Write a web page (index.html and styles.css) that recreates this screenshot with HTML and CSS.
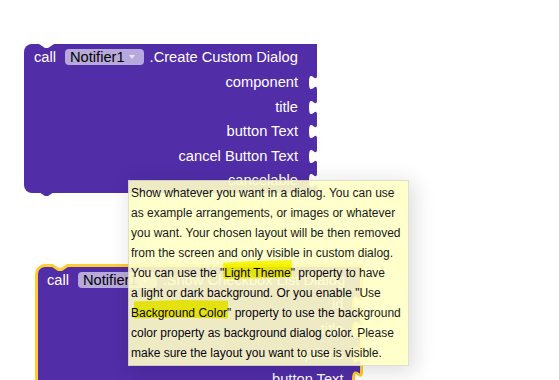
FILE: index.html
```html
<!DOCTYPE html>
<html>
<head>
<meta charset="utf-8">
<link rel="stylesheet" href="styles.css">
</head>
<body>
<div class="workspace">
  <div class="block block-a">
    <svg class="notch" width="15" height="5" viewBox="0 0 15 5"><path d="M0,0 L6,4 L9,4 L15,0 Z" fill="#fff"/></svg>
    <div class="head">
      <span class="kw">call</span>
      <span class="dd">Notifier1<svg class="arr" width="6" height="4" viewBox="0 0 6 4"><path d="M0,0 H6 L3,4 Z" fill="#e9e3f5"/></svg></span>
      <span class="meth">.Create Custom Dialog</span>
    </div>
    <div class="row"><span>component</span><svg class="sock" width="8" height="15" viewBox="0 0 8 15"><path d="M8,0 C8,10 0,-8 0,7.5 S8,5 8,15 Z" fill="#fff"/></svg></div>
    <div class="row"><span>title</span><svg class="sock" width="8" height="15" viewBox="0 0 8 15"><path d="M8,0 C8,10 0,-8 0,7.5 S8,5 8,15 Z" fill="#fff"/></svg></div>
    <div class="row"><span>button Text</span><svg class="sock" width="8" height="15" viewBox="0 0 8 15"><path d="M8,0 C8,10 0,-8 0,7.5 S8,5 8,15 Z" fill="#fff"/></svg></div>
    <div class="row"><span>cancel Button Text</span><svg class="sock" width="8" height="15" viewBox="0 0 8 15"><path d="M8,0 C8,10 0,-8 0,7.5 S8,5 8,15 Z" fill="#fff"/></svg></div>
    <div class="row"><span>cancelable</span><svg class="sock" width="8" height="15" viewBox="0 0 8 15"><path d="M8,0 C8,10 0,-8 0,7.5 S8,5 8,15 Z" fill="#fff"/></svg></div>
    <svg class="tab" width="15" height="5" viewBox="0 0 15 5"><path d="M0,0 L6,4 L9,4 L15,0 Z" fill="#512da8"/></svg>
  </div>

  <div class="block block-b">
    <svg class="notch-b" width="18" height="9" viewBox="0 0 18 9"><path d="M1.5,0 H16.5 V1.5 L10.5,5.5 H7.5 L1.5,1.5 Z" fill="#fff"/><path d="M0,1.5 L1.5,1.5 L7.5,5.5 L10.5,5.5 L16.5,1.5 L18,1.5" fill="none" stroke="#fc3" stroke-width="3" stroke-linejoin="round"/></svg>
    <div class="head">
      <span class="kw">call</span>
      <span class="dd">Notifier1<svg class="arr" width="6" height="4" viewBox="0 0 6 4"><path d="M0,0 H6 L3,4 Z" fill="#e9e3f5"/></svg></span>
      <span class="meth">.Show Checkbox List Dialog</span>
    </div>
    <div class="row"><span>id</span><svg class="sock" width="11" height="15" viewBox="0 0 11 15"><path d="M9.5,0 C9.5,10 1.5,-8 1.5,7.5 S9.5,5 9.5,15 L11,15 L11,0 Z" fill="#fff"/><path d="M9.5,0 C9.5,10 1.5,-8 1.5,7.5 S9.5,5 9.5,15" fill="none" stroke="#fc3" stroke-width="3"/></svg></div>
    <div class="row"><span>title</span><svg class="sock" width="11" height="15" viewBox="0 0 11 15"><path d="M9.5,0 C9.5,10 1.5,-8 1.5,7.5 S9.5,5 9.5,15 L11,15 L11,0 Z" fill="#fff"/><path d="M9.5,0 C9.5,10 1.5,-8 1.5,7.5 S9.5,5 9.5,15" fill="none" stroke="#fc3" stroke-width="3"/></svg></div>
    <div class="row"><span>options</span><svg class="sock" width="11" height="15" viewBox="0 0 11 15"><path d="M9.5,0 C9.5,10 1.5,-8 1.5,7.5 S9.5,5 9.5,15 L11,15 L11,0 Z" fill="#fff"/><path d="M9.5,0 C9.5,10 1.5,-8 1.5,7.5 S9.5,5 9.5,15" fill="none" stroke="#fc3" stroke-width="3"/></svg></div>
    <div class="row"><span>button Text</span><svg class="sock" width="11" height="15" viewBox="0 0 11 15"><path d="M9.5,0 C9.5,10 1.5,-8 1.5,7.5 S9.5,5 9.5,15 L11,15 L11,0 Z" fill="#fff"/><path d="M9.5,0 C9.5,10 1.5,-8 1.5,7.5 S9.5,5 9.5,15" fill="none" stroke="#fc3" stroke-width="3"/></svg></div>
    <div class="row"><span>cancel Button Text</span><svg class="sock" width="11" height="15" viewBox="0 0 11 15"><path d="M9.5,0 C9.5,10 1.5,-8 1.5,7.5 S9.5,5 9.5,15 L11,15 L11,0 Z" fill="#fff"/><path d="M9.5,0 C9.5,10 1.5,-8 1.5,7.5 S9.5,5 9.5,15" fill="none" stroke="#fc3" stroke-width="3"/></svg></div>
  </div>

  <div class="tooltip">Show whatever you want in a dialog. You can use<br>as example arrangements, or images or whatever<br>you want. Your chosen layout will be then removed<br>from the screen and only visible in custom dialog.<br>You can use the "<span class="hl hl-a">Light Theme</span>" property to have<br>a light or dark background. Or you enable "Use<br><span class="hl hl-b">Background Color</span>" property to use the background<br>color property as background dialog color. Please<br>make sure the layout you want to use is visible.</div>
</div>
</body>
</html>
```

FILE: styles.css
```css
html, body {
  margin: 0;
  padding: 0;
}
body {
  width: 559px;
  height: 380px;
  overflow: hidden;
  background: #fff;
  font-family: "Liberation Sans", Arial, sans-serif;
}
.workspace {
  position: relative;
  width: 559px;
  height: 380px;
  overflow: hidden;
}
.block {
  position: absolute;
  box-sizing: border-box;
  background: #512da8;
  color: #fff;
  font-size: 11pt;
}
.block-a {
  left: 24px;
  top: 44px;
  width: 293px;
  height: 149px;
  border-radius: 8px 0 0 8px;
  padding-left: 10px;
}
.block-b {
  left: 35px;
  top: 264px;
  width: 327.5px;
  height: 220px;
  border: 3px solid #fc3;
  border-radius: 10px 0 0 0;
  padding-left: 9px;
}
.head {
  display: flex;
  align-items: center;
  white-space: nowrap;
  height: 26px;
}
.block-b .head {
  height: 25px;
}
.kw {
  margin-right: 9px;
}
.dd {
  display: inline-flex;
  align-items: center;
  height: 16px;
  line-height: 16px;
  padding: 0 9px 0 5px;
  border-radius: 4px;
  background: #b8a9dc;
  color: #000;
}
.arr {
  margin-left: 4px;
}
.meth {
  margin-left: 6px;
}
.row {
  display: flex;
  justify-content: flex-end;
  align-items: flex-start;
  height: 24.5px;
  line-height: 24.5px;
  white-space: nowrap;
}
.block-b .row {
  height: 25px;
  line-height: 25px;
}
.sock {
  margin: 5px 0 0 11px;
  overflow: visible;
  flex: none;
}
.block-b .sock {
  margin: 5px -3px 0 8px;
}
.notch {
  position: absolute;
  top: 0;
  left: 15px;
}
.notch-b {
  position: absolute;
  top: -3px;
  left: 13px;
  overflow: visible;
}
.tab {
  position: absolute;
  bottom: -4px;
  left: 15px;
}
.tooltip {
  position: absolute;
  left: 128px;
  top: 180px;
  width: 281px;
  box-sizing: border-box;
  background: #ffffc7;
  border: 1px solid #ddc;
  box-shadow: 4px 4px 20px 1px rgba(0, 0, 0, 0.15);
  color: #000;
  font-family: "Liberation Sans", Arial, sans-serif;
  font-size: 12px;
  line-height: 20px;
  opacity: 0.9;
  padding: 2px;
  white-space: nowrap;
  z-index: 10;
}
.hl {
  position: relative;
}
.hl::before {
  content: "";
  position: absolute;
  background: #f5f500;
  z-index: -1;
}
.hl-a::before {
  left: -1px;
  right: -1px;
  top: -6px;
  bottom: 1px;
  clip-path: polygon(0 14%, 35% 6%, 100% 0, 100% 90%, 50% 97%, 0 100%);
}
.hl-b::before {
  left: 3px;
  right: -1px;
  top: -6px;
  bottom: 1.5px;
  clip-path: polygon(0 8%, 50% 0, 100% 4%, 100% 100%, 45% 96%, 0 100%);
}
```
